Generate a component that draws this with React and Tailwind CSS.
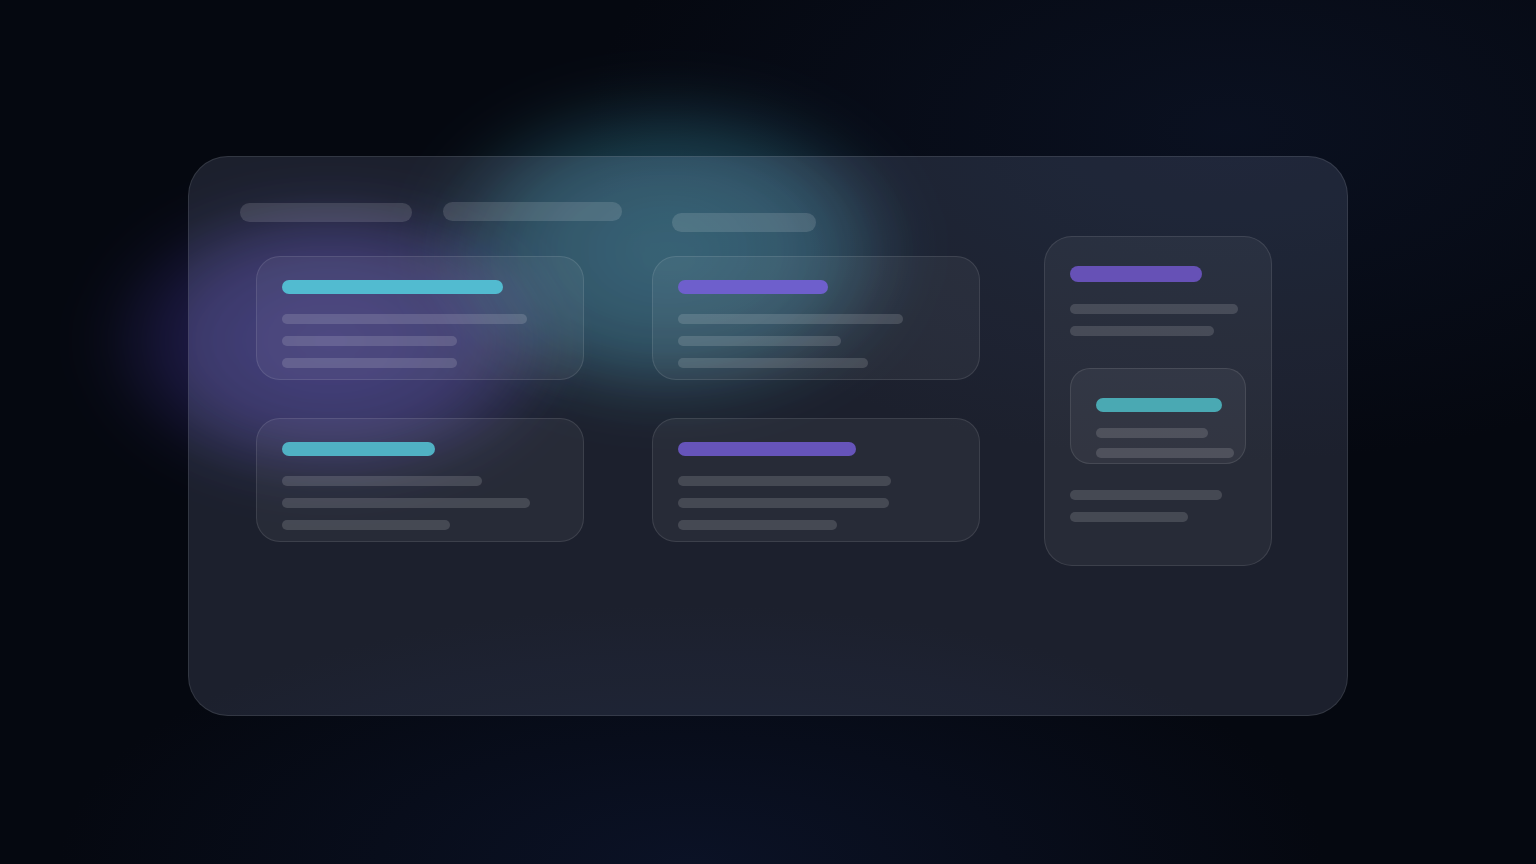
import React from "react";

function Bar({ w, h = "h-[10px]", color = "bg-white/[0.14]", extra = "" }) {
  return <div className={`${h} ${color} rounded-full ${extra}`} style={{ width: w }} />;
}

function Card({ title, titleColor, lines }) {
  return (
    <div className="h-[124px] w-[328px] rounded-[24px] border border-white/10 bg-white/[0.05] pl-[25px] pt-[23px]">
      <Bar w={title} h="h-[14px]" color={titleColor} />
      <div className="mt-[20px] flex flex-col gap-[12px]">
        {lines.map((l, i) => (
          <Bar key={i} w={l} />
        ))}
      </div>
    </div>
  );
}

export default function App() {
  return (
    <div className="relative flex h-screen min-h-[864px] w-full items-center justify-center overflow-hidden bg-[#050810] pt-[8px] font-['Inter',sans-serif]">
      {/* background glows */}
      <div className="pointer-events-none absolute inset-0 bg-[radial-gradient(ellipse_60%_55%_at_80%_15%,rgba(22,36,70,0.3),transparent_70%)]" />
      <div className="pointer-events-none absolute inset-0 bg-[radial-gradient(ellipse_55%_40%_at_45%_100%,rgba(18,30,64,0.45),transparent_75%)]" />

      {/* blobs */}
      <div className="pointer-events-none absolute left-[88px] top-[188px] h-[305px] w-[485px] rounded-full bg-[radial-gradient(closest-side,rgba(82,62,190,0.4),rgba(78,58,180,0.32)_55%,transparent)] blur-xl mix-blend-screen" />
      <div className="pointer-events-none absolute left-[415px] top-[82px] h-[335px] w-[505px] rounded-full bg-[radial-gradient(closest-side,rgba(60,155,178,0.45),rgba(55,148,170,0.36)_55%,transparent)] blur-xl mix-blend-screen" />

      {/* glass panel */}
      <div className="relative h-[560px] w-[1160px] overflow-hidden rounded-[40px] border border-white/10 bg-[rgba(170,185,225,0.14)] pl-[51px] pt-[45px]">
        {/* glow seen through the glass */}
        <div className="pointer-events-none absolute left-[-96px] top-[34px] h-[300px] w-[475px] rounded-full bg-[radial-gradient(closest-side,rgba(110,95,200,0.17),rgba(105,90,195,0.14)_60%,transparent)] blur-lg mix-blend-screen" />
        <div className="pointer-events-none absolute left-[240px] top-[-60px] h-[320px] w-[480px] rounded-full bg-[radial-gradient(closest-side,rgba(70,150,175,0.1),rgba(70,150,175,0.08)_60%,transparent)] blur-lg mix-blend-screen" />

        <div className="relative">
          {/* header pills */}
          <div className="flex items-start">
            <div className="mt-[1px] h-[19px] w-[172px] rounded-full bg-white/[0.13]" />
            <div className="ml-[31px] h-[19px] w-[179px] rounded-full bg-white/[0.13]" />
            <div className="ml-[50px] mt-[11px] h-[19px] w-[144px] rounded-full bg-white/[0.13]" />
          </div>

          {/* content */}
          <div className="mt-[4px] ml-[16px] flex items-start gap-[64px]">
            <div className="mt-[20px] grid grid-cols-[328px_328px] gap-x-[68px] gap-y-[38px]">
              <Card title="221px" titleColor="bg-[#52bbd0]" lines={["245px", "175px", "175px"]} />
              <Card title="150px" titleColor="bg-[#6e5fcc]" lines={["225px", "163px", "190px"]} />
              <Card title="153px" titleColor="bg-[#50b1c4]" lines={["200px", "248px", "168px"]} />
              <Card title="178px" titleColor="bg-[#6654ba]" lines={["213px", "211px", "159px"]} />
            </div>

            <div className="h-[330px] w-[228px] rounded-[28px] border border-white/10 bg-white/[0.05] pl-[25px] pt-[29px]">
              <Bar w="132px" h="h-[16px]" color="bg-[#6651b6]" />
              <div className="mt-[22px] flex flex-col gap-[12px]">
                <Bar w="168px" />
                <Bar w="144px" />
              </div>
              <div className="mt-[32px] h-[96px] w-[176px] rounded-[20px] border border-white/10 bg-white/[0.05] pl-[25px] pt-[29px]">
                <Bar w="126px" h="h-[14px]" color="bg-[#4aa9b3]" />
                <div className="mt-[16px] flex flex-col gap-[10px]">
                  <Bar w="112px" />
                  <Bar w="138px" />
                </div>
              </div>
              <div className="mt-[26px] flex flex-col gap-[12px]">
                <Bar w="152px" />
                <Bar w="118px" />
              </div>
            </div>
          </div>
        </div>
      </div>
    </div>
  );
}
